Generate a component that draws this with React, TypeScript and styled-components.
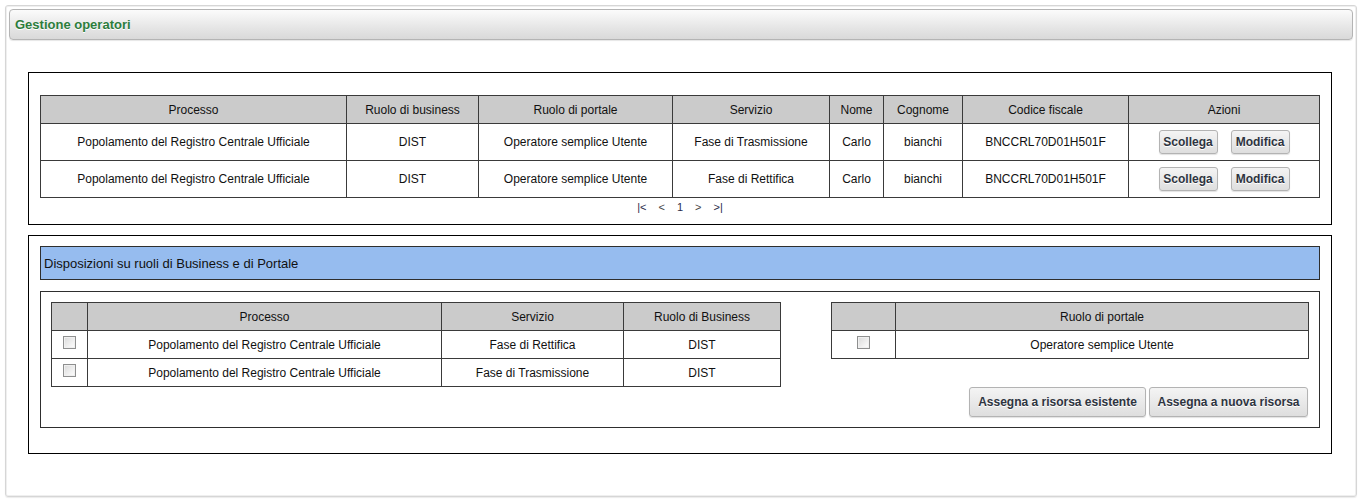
import React from "react";
import styled, { createGlobalStyle } from "styled-components";

const Global = createGlobalStyle`
  html, body { margin: 0; padding: 0; background: #fff; }
  body { font-family: "Liberation Sans", Arial, sans-serif; font-size: 12px; color: #000; }
  * { box-sizing: border-box; }
`;

const Page = styled.div`
  padding: 5px 5px 6px 5px;
`;

const Panel = styled.div`
  border: 1px solid #d6d6d6;
  border-radius: 3px;
  box-shadow: inset 0 0 0 1px #efefef, 0 1px 1px rgba(0,0,0,0.08);
  padding: 3px 3px 42px 3px;
`;

const HeaderBar = styled.div`
  height: 31px;
  border: 1px solid #b4b4b4;
  border-radius: 4px;
  background: linear-gradient(#fbfbfb, #e6e6e6 60%, #d9d9d9);
  box-shadow: 0 1px 1px rgba(0,0,0,0.1);
  display: flex;
  align-items: center;
  padding-left: 5px;
`;

const Title = styled.h1`
  margin: 0;
  font-size: 13px;
  font-weight: bold;
  color: #2d7d3c;
  text-shadow: 0 1px 0 #fff;
`;

const Content = styled.div`
  padding: 32px 21px 0 19px;
  display: flex;
  flex-direction: column;
  gap: 10px;
`;

const Box = styled.div<{ $pt: number; $pb: number }>`
  border: 1px solid #000;
  padding: ${(p) => p.$pt}px 11px ${(p) => p.$pb}px 11px;
`;

const Grid = styled.table<{ $w: number }>`
  border-collapse: collapse;
  table-layout: fixed;
  width: ${(p) => p.$w}px;
  font-size: 12px;
`;

const Th = styled.th<{ $h: number }>`
  background: #cbcbcb;
  border: 1px solid #3a3a3a;
  height: ${(p) => p.$h}px;
  font-weight: normal;
  text-align: center;
  padding: 0 4px;
  color: #111;
`;

const Td = styled.td<{ $h: number }>`
  border: 1px solid #3a3a3a;
  height: ${(p) => p.$h}px;
  text-align: center;
  padding: 0 4px;
  color: #111;
`;

const CheckTd = styled.td<{ $h: number }>`
  border: 1px solid #3a3a3a;
  height: ${(p) => p.$h}px;
  text-align: center;
  vertical-align: top;
  padding: 5px 0 0 0;
`;

const Check = styled.input.attrs({ type: "checkbox" })`
  appearance: none;
  -webkit-appearance: none;
  width: 13px;
  height: 13px;
  margin: 0;
  border: 1px solid #8e8f8f;
  background: linear-gradient(135deg, #d9d9d9, #f4f4f4 70%, #fdfdfd);
  box-shadow: inset 0 0 0 1px #f0f0f0;
  display: inline-block;
  vertical-align: top;
`;

const Actions = styled.div`
  display: flex;
  justify-content: center;
  gap: 13px;
`;

const Button = styled.button<{ $w: number; $h: number }>`
  width: ${(p) => p.$w}px;
  height: ${(p) => p.$h}px;
  padding: 0;
  font-family: "Liberation Sans", Arial, sans-serif;
  font-size: 12px;
  font-weight: bold;
  color: #2e3440;
  border: 1px solid #b3b3b3;
  border-radius: 3px;
  background: linear-gradient(#f4f4f4, #dedede);
  box-shadow: 0 1px 1px rgba(0,0,0,0.12);
  text-shadow: 0 1px 0 #fff;
  cursor: pointer;
`;

const Pager = styled.div`
  display: flex;
  justify-content: center;
  gap: 12px;
  margin-top: 3px;
  padding-left: 0;
  font-size: 11px;
  color: #333;
  line-height: 13px;
`;

const PageLink = styled.span<{ $strong?: boolean }>`
  color: ${(p) => (p.$strong ? "#2b2b4a" : "#444")};
`;

const Banner = styled.div`
  height: 34px;
  border: 1px solid #2e2e2e;
  background: #96bcef;
  display: flex;
  align-items: center;
  padding-left: 3px;
  font-size: 13px;
  color: #111;
`;

const Inner = styled.div`
  margin-top: 11px;
  border: 1px solid #2e2e2e;
  padding: 10px 10px 10px 10px;
`;

const TablesRow = styled.div`
  display: flex;
  justify-content: space-between;
  align-items: flex-start;
`;

const ButtonRow = styled.div`
  display: flex;
  justify-content: flex-end;
  gap: 3px;
  margin-top: 0;
  padding-right: 1px;
`;

const rows1 = [
  ["Popolamento del Registro Centrale Ufficiale", "DIST", "Operatore semplice Utente", "Fase di Trasmissione", "Carlo", "bianchi", "BNCCRL70D01H501F"],
  ["Popolamento del Registro Centrale Ufficiale", "DIST", "Operatore semplice Utente", "Fase di Rettifica", "Carlo", "bianchi", "BNCCRL70D01H501F"],
];
const heads1 = ["Processo", "Ruolo di business", "Ruolo di portale", "Servizio", "Nome", "Cognome", "Codice fiscale", "Azioni"];
const widths1 = [306, 132, 194, 157, 54, 79, 166, 191];

const rows2 = [
  ["Popolamento del Registro Centrale Ufficiale", "Fase di Rettifica", "DIST"],
  ["Popolamento del Registro Centrale Ufficiale", "Fase di Trasmissione", "DIST"],
];

export default function App() {
  return (
    <Page>
      <Global />
      <Panel>
        <HeaderBar>
          <Title>Gestione operatori</Title>
        </HeaderBar>
        <Content>
          <Box $pt={22} $pb={10}>
            <Grid $w={1279}>
              <colgroup>
                {widths1.map((w, i) => (
                  <col key={i} style={{ width: w }} />
                ))}
              </colgroup>
              <thead>
                <tr>
                  {heads1.map((h) => (
                    <Th key={h} $h={28}>{h}</Th>
                  ))}
                </tr>
              </thead>
              <tbody>
                {rows1.map((r, i) => (
                  <tr key={i}>
                    {r.map((c, j) => (
                      <Td key={j} $h={37}>{c}</Td>
                    ))}
                    <Td $h={37}>
                      <Actions>
                        <Button $w={59} $h={24}>Scollega</Button>
                        <Button $w={59} $h={24}>Modifica</Button>
                      </Actions>
                    </Td>
                  </tr>
                ))}
              </tbody>
            </Grid>
            <Pager>
              <PageLink $strong>|&lt;</PageLink>
              <PageLink>&lt;</PageLink>
              <PageLink $strong>1</PageLink>
              <PageLink>&gt;</PageLink>
              <PageLink $strong>&gt;|</PageLink>
            </Pager>
          </Box>
          <Box $pt={10} $pb={25}>
            <Banner>Disposizioni su ruoli di Business e di Portale</Banner>
            <Inner>
              <TablesRow>
                <Grid $w={729}>
                  <colgroup>
                    <col style={{ width: 36 }} />
                    <col style={{ width: 354 }} />
                    <col style={{ width: 182 }} />
                    <col style={{ width: 157 }} />
                  </colgroup>
                  <thead>
                    <tr>
                      <Th $h={28}></Th>
                      <Th $h={28}>Processo</Th>
                      <Th $h={28}>Servizio</Th>
                      <Th $h={28}>Ruolo di Business</Th>
                    </tr>
                  </thead>
                  <tbody>
                    {rows2.map((r, i) => (
                      <tr key={i}>
                        <CheckTd $h={28}><Check /></CheckTd>
                        {r.map((c, j) => (
                          <Td key={j} $h={28}>{c}</Td>
                        ))}
                      </tr>
                    ))}
                  </tbody>
                </Grid>
                <Grid $w={477}>
                  <colgroup>
                    <col style={{ width: 64 }} />
                    <col style={{ width: 413 }} />
                  </colgroup>
                  <thead>
                    <tr>
                      <Th $h={28}></Th>
                      <Th $h={28}>Ruolo di portale</Th>
                    </tr>
                  </thead>
                  <tbody>
                    <tr>
                      <CheckTd $h={28}><Check /></CheckTd>
                      <Td $h={28}>Operatore semplice Utente</Td>
                    </tr>
                  </tbody>
                </Grid>
              </TablesRow>
              <ButtonRow>
                <Button $w={177} $h={30}>Assegna a risorsa esistente</Button>
                <Button $w={159} $h={30}>Assegna a nuova risorsa</Button>
              </ButtonRow>
            </Inner>
          </Box>
        </Content>
      </Panel>
    </Page>
  );
}
